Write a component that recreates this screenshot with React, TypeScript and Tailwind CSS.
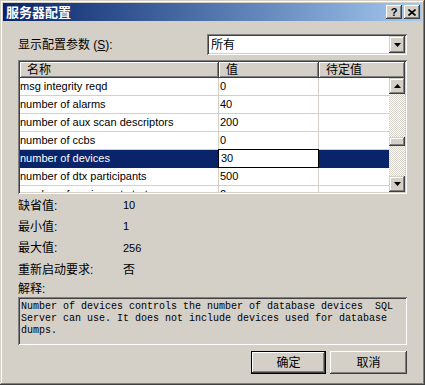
import React from "react";

const ui = "font-['Liberation_Sans','Noto_Sans_CJK_SC',sans-serif]";

const rows = [
  { name: "msg integrity reqd", value: "0" },
  { name: "number of alarms", value: "40" },
  { name: "number of aux scan descriptors", value: "200" },
  { name: "number of ccbs", value: "0" },
  { name: "number of devices", value: "30", selected: true },
  { name: "number of dtx participants", value: "500" },
  { name: "number of engines at startup", value: "2" },
];

const info = [
  { label: "缺省值:", value: "10", h: "h-[21px]" },
  { label: "最小值:", value: "1", h: "h-[21px]" },
  { label: "最大值:", value: "256", h: "h-[22px]" },
  { label: "重新启动要求:", value: "否", h: "h-[21px]" },
];

function Arrow({ up }: { up?: boolean }) {
  return (
    <svg width="7" height="4" viewBox="0 0 7 4">
      {up ? <polygon points="3.5,0 7,4 0,4" fill="#000" /> : <polygon points="0,0 7,0 3.5,4" fill="#000" />}
    </svg>
  );
}

function HeaderCell({ label, w }: { label: string; w: string }) {
  return (
    <div
      className={`${w} h-full flex items-center pl-[7px] text-[12px] text-black bg-[#d4d0c8] shadow-[inset_-1px_-1px_#404040,inset_1px_1px_#ffffff,inset_-2px_-2px_#808080]`}
    >
      {label}
    </div>
  );
}

export default function App() {
  return (
    <div className={`w-[425px] h-[385px] bg-[#d4d0c8] p-[3px] flex flex-col shadow-[inset_-1px_-1px_#404040,inset_1px_1px_#d4d0c8,inset_-2px_-2px_#808080,inset_2px_2px_#ffffff] ${ui}`}>
      {/* title bar */}
      <div className="h-[18px] flex items-center justify-between bg-gradient-to-r from-[#0a246a] to-[#a6caf0]">
        <span className="pl-[3px] text-white font-bold text-[13px] leading-none">服务器配置</span>
        <div className="flex gap-[2px] pr-[2px]">
          <div className="w-[16px] h-[14px] flex items-center justify-center bg-[#d4d0c8] text-[11px] font-bold leading-none shadow-[inset_-1px_-1px_#404040,inset_1px_1px_#ffffff,inset_-2px_-2px_#808080]">?</div>
          <div className="w-[16px] h-[14px] flex items-center justify-center bg-[#d4d0c8] shadow-[inset_-1px_-1px_#404040,inset_1px_1px_#ffffff,inset_-2px_-2px_#808080]">
            <svg width="8" height="7" viewBox="0 0 8 7">
              <path d="M0.5 0.5 L7.5 6.5 M7.5 0.5 L0.5 6.5" stroke="#000" strokeWidth="1.6" />
            </svg>
          </div>
        </div>
      </div>

      <div className="flex-1 flex flex-col pl-[15px] pr-[15px]">
        {/* display option */}
        <div className="mt-[13px] h-[21px] flex items-center justify-between">
          <span className="text-[12px] text-black">
            显示配置参数 (<span className="underline">S</span>):
          </span>
          <div className="w-[200px] h-full bg-white flex items-center justify-between pl-[4px] pr-[2px] shadow-[inset_1px_1px_#808080,inset_-1px_-1px_#ffffff,inset_2px_2px_#404040,inset_-2px_-2px_#d4d0c8]">
            <span className="text-[12px] text-black">所有</span>
            <div className="w-[16px] h-[17px] flex items-center justify-center bg-[#d4d0c8] shadow-[inset_-1px_-1px_#404040,inset_1px_1px_#d4d0c8,inset_-2px_-2px_#808080,inset_2px_2px_#ffffff]">
              <Arrow />
            </div>
          </div>
        </div>

        {/* list view */}
        <div className="mt-[5px] h-[134px] bg-white p-[2px] flex flex-col shadow-[inset_1px_1px_#808080,inset_-1px_-1px_#ffffff,inset_2px_2px_#404040,inset_-2px_-2px_#d4d0c8]">
          <div className="h-[16px] flex shrink-0">
            <HeaderCell label="名称" w="w-[199px]" />
            <HeaderCell label="值" w="w-[100px]" />
            <HeaderCell label="待定值" w="flex-1" />
          </div>
          <div className="flex-1 flex overflow-hidden">
            <div className="flex-1 overflow-hidden">
              {rows.map((r) => (
                <div key={r.name} className={`h-[18px] flex text-[11px] ${r.selected ? "bg-[#0a246a] text-white" : "text-black"}`}>
                  <div className={`w-[199px] h-full flex items-center pl-[0px] border-r border-b ${r.selected ? "border-[#0a246a]" : "border-[#d4d0c8]"}`}>
                    {r.name}
                  </div>
                  {r.selected ? (
                    <div className="w-[101px] -ml-[1px] h-[19px] -mt-[1px] flex items-center pl-[2px] bg-white text-black border border-black">
                      {r.value}
                    </div>
                  ) : (
                    <div className="w-[100px] h-full flex items-center pl-[1px] border-r border-b border-[#d4d0c8]">{r.value}</div>
                  )}
                  <div className={`flex-1 h-full border-b ${r.selected ? "border-[#0a246a]" : "border-[#d4d0c8]"}`} />
                </div>
              ))}
            </div>
            {/* scrollbar */}
            <div className="w-[16px] flex flex-col">
              <div className="h-[16px] shrink-0 flex items-center justify-center bg-[#d4d0c8] shadow-[inset_-1px_-1px_#404040,inset_1px_1px_#d4d0c8,inset_-2px_-2px_#808080,inset_2px_2px_#ffffff]">
                <Arrow up />
              </div>
              <div className="h-[43px] bg-[repeating-conic-gradient(#d4d0c8_0%_25%,#ffffff_0%_50%)] bg-[length:2px_2px]" />
              <div className="h-[9px] bg-[#d4d0c8] shadow-[inset_-1px_-1px_#404040,inset_1px_1px_#d4d0c8,inset_-2px_-2px_#808080,inset_2px_2px_#ffffff]" />
              <div className="flex-1 bg-[repeating-conic-gradient(#d4d0c8_0%_25%,#ffffff_0%_50%)] bg-[length:2px_2px]" />
              <div className="h-[16px] shrink-0 flex items-center justify-center bg-[#d4d0c8] shadow-[inset_-1px_-1px_#404040,inset_1px_1px_#d4d0c8,inset_-2px_-2px_#808080,inset_2px_2px_#ffffff]">
                <Arrow />
              </div>
            </div>
          </div>
        </div>

        {/* details */}
        <div className="mt-[1px] flex flex-col">
          {info.map((i) => (
            <div key={i.label} className={`${i.h} flex items-center text-[12px] text-black`}>
              <span className="w-[105px]">{i.label}</span>
              <span className={i.value === "否" ? "" : "text-[11px]"}>{i.value}</span>
            </div>
          ))}
          <div className="h-[17px] pt-[2px] text-[12px] leading-[14px] text-black">解释:</div>
        </div>

        <div className="h-[48px] bg-[#d4d0c8] pt-[4px] pl-[3px] font-['Liberation_Mono',monospace] text-[10px] leading-[12px] text-black whitespace-pre shadow-[inset_1px_1px_#808080,inset_-1px_-1px_#ffffff,inset_2px_2px_#404040,inset_-2px_-2px_#d4d0c8]">
          <div>Number of devices controls the number of database devices  SQL</div>
          <div>Server can use. It does not include devices used for database</div>
          <div>dumps.</div>
        </div>

        {/* buttons */}
        <div className="mt-[6px] flex justify-end gap-[4px]">
          <button className="w-[75px] h-[23px] border border-black bg-[#d4d0c8] text-[12px] text-black shadow-[inset_-1px_-1px_#404040,inset_1px_1px_#ffffff,inset_-2px_-2px_#808080]">
            确定
          </button>
          <button className="w-[77px] h-[23px] bg-[#d4d0c8] text-[12px] text-black shadow-[inset_-1px_-1px_#404040,inset_1px_1px_#ffffff,inset_-2px_-2px_#808080]">
            取消
          </button>
        </div>
      </div>
    </div>
  );
}
